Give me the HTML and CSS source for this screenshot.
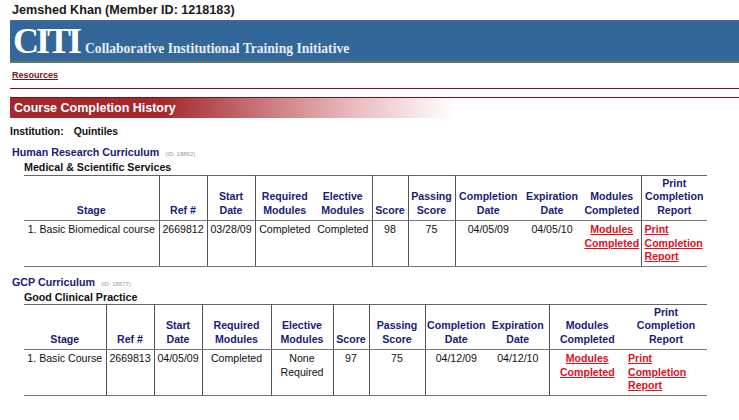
FILE: index.html
```html
<!DOCTYPE html>
<html>
<head>
  <meta charset="UTF-8">
  <title>Course Completion History</title>
  <link rel="stylesheet" href="styles.css">
</head>
<body>
  <div class="member">Jemshed Khan (Member ID: 1218183)</div>

  <div class="banner">
    <span class="logo">CITI</span>
    <span class="tagline">Collaborative Institutional Training Initiative</span>
  </div>

  <div class="nav"><a href="#">Resources</a></div>

  <h1>Course Completion History</h1>

  <p class="institution"><b>Institution:</b><b>Quintiles</b></p>

  <!-- Curriculum 1 -->
  <h2>Human Research Curriculum <small>(ID: 18862)</small></h2>
  <h3>Medical &amp; Scientific Services</h3>
  <table class="first">
    <colgroup>
      <col class="c1"><col class="c2"><col class="c3"><col class="c4"><col class="c5"><col class="c6">
      <col class="c7"><col class="c8"><col class="c9"><col class="c10"><col class="c11">
    </colgroup>
    <tr>
      <th class="sep">Stage</th>
      <th class="sep">Ref #</th>
      <th class="sep">Start Date</th>
      <th>Required Modules</th>
      <th class="sep">Elective Modules</th>
      <th class="sep">Score</th>
      <th class="sep">Passing Score</th>
      <th>Completion Date</th>
      <th>Expiration Date</th>
      <th class="sep">Modules Completed</th>
      <th>Print Completion Report</th>
    </tr>
    <tr>
      <td class="sep">1. Basic Biomedical course</td>
      <td class="sep">2669812</td>
      <td class="sep">03/28/09</td>
      <td>Completed</td>
      <td class="sep">Completed</td>
      <td class="sep">98</td>
      <td class="sep">75</td>
      <td>04/05/09</td>
      <td>04/05/10</td>
      <td class="sep"><a href="#">Modules Completed</a></td>
      <td class="left"><a href="#">Print Completion Report</a></td>
    </tr>
  </table>

  <!-- Curriculum 2 -->
  <h2>GCP Curriculum <small>(ID: 18677)</small></h2>
  <h3>Good Clinical Practice</h3>
  <table class="second">
    <colgroup>
      <col class="c1"><col class="c2"><col class="c3"><col class="c4"><col class="c5"><col class="c6">
      <col class="c7"><col class="c8"><col class="c9"><col class="c10"><col class="c11">
    </colgroup>
    <tr>
      <th class="sep">Stage</th>
      <th class="sep">Ref #</th>
      <th class="sep">Start Date</th>
      <th class="sep">Required Modules</th>
      <th class="sep">Elective Modules</th>
      <th class="sep">Score</th>
      <th class="sep">Passing Score</th>
      <th>Completion Date</th>
      <th class="sep">Expiration Date</th>
      <th>Modules Completed</th>
      <th>Print Completion Report</th>
    </tr>
    <tr>
      <td class="sep">1. Basic Course</td>
      <td class="sep">2669813</td>
      <td class="sep">04/05/09</td>
      <td class="sep">Completed</td>
      <td class="sep">None Required</td>
      <td class="sep">97</td>
      <td class="sep">75</td>
      <td>04/12/09</td>
      <td class="sep">04/12/10</td>
      <td><a href="#">Modules Completed</a></td>
      <td class="left"><a href="#">Print Completion Report</a></td>
    </tr>
  </table>
</body>
</html>
```

FILE: styles.css
```css
body {
  margin: 0;
  font-family: "Liberation Sans", Arial, sans-serif;
  font-size: 10.6px;
  color: #111;
  background-color: #fff;
}
.member {
  height: 20px;
  padding-left: 12px;
  font-size: 12.6px;
  font-weight: bold;
  line-height: 21px;
  color: #1a1a1a;
}
.banner {
  display: flex;
  align-items: baseline;
  height: 41px;
  margin-left: 10px;
  padding-left: 3px;
  overflow: hidden;
  font-family: "Liberation Serif", "Times New Roman", serif;
  font-weight: bold;
  color: #fff;
  background-color: #336699;
  border-bottom: 2px solid #5d7a56;
  box-shadow: inset 0 1px 0 #4a6a8c, inset 0 -2px 0 #3a66a8;
}
.logo {
  font-size: 36px;
  line-height: 42px;
  letter-spacing: -3px;
}
.tagline {
  margin-left: 6px;
  font-size: 13.6px;
  color: #e6eef5;
}
.nav {
  height: 25px;
  margin-left: 10px;
  padding-left: 2px;
  font-size: 9px;
  font-weight: bold;
  line-height: 24px;
  border-bottom: 1px solid #7a1020;
}
.nav a {
  color: #7a1020;
}
h1 {
  height: 20px;
  margin: 8px 0 0 10px;
  padding-left: 4px;
  font-size: 12.5px;
  line-height: 20px;
  color: #fff;
  background: linear-gradient(to right, #a5282d 0, #a5282d 150px, #e8b8bc 340px, #fff 445px);
  border-top: 1px solid #7a1020;
}
.institution {
  display: flex;
  gap: 10px;
  margin: 7px 0 0 10px;
  font-size: 10.4px;
  line-height: 14px;
}
h2 {
  margin: 6px 0 0 12px;
  font-size: 10.7px;
  line-height: 14px;
  color: #1a1a7a;
}
h2 small {
  margin-left: 3px;
  font-size: 6px;
  font-weight: normal;
  color: #999;
}
h3 {
  margin: -1px 0 0 24px;
  font-size: 10.7px;
  line-height: 14px;
  color: #111;
}
table {
  width: 683px;
  margin: 1px 0 8px 24px;
  table-layout: fixed;
  border-collapse: collapse;
  border-top: 1px solid #666;
}
table.second {
  margin-top: 0;
}
th, td {
  padding: 0 1px;
  line-height: 13.5px;
  text-align: center;
  border-bottom: 1px solid #777;
}
th {
  height: 41px;
  vertical-align: bottom;
  color: #1a1a7a;
  padding-bottom: 3px;
}
td {
  height: 43px;
  vertical-align: top;
  padding-top: 2px;
}
.sep {
  border-right: 1px solid #555;
}
td a {
  font-weight: bold;
  color: #e01020;
}
td.left {
  text-align: left;
  padding-left: 3px;
}
.first .c1 { width: 135px; }
.first .c2 { width: 48px; }
.first .c3 { width: 48px; }
.first .c4 { width: 59px; }
.first .c5 { width: 58px; }
.first .c6 { width: 36px; }
.first .c7 { width: 47px; }
.first .c8 { width: 66px; }
.first .c9 { width: 62px; }
.first .c10 { width: 58px; }
.first .c11 { width: 66px; }
.second .c1 { width: 82px; }
.second .c2 { width: 48px; }
.second .c3 { width: 48px; }
.second .c4 { width: 69px; }
.second .c5 { width: 62px; }
.second .c6 { width: 36px; }
.second .c7 { width: 56px; }
.second .c8 { width: 62px; }
.second .c9 { width: 62px; }
.second .c10 { width: 76px; }
.second .c11 { width: 82px; }
```
